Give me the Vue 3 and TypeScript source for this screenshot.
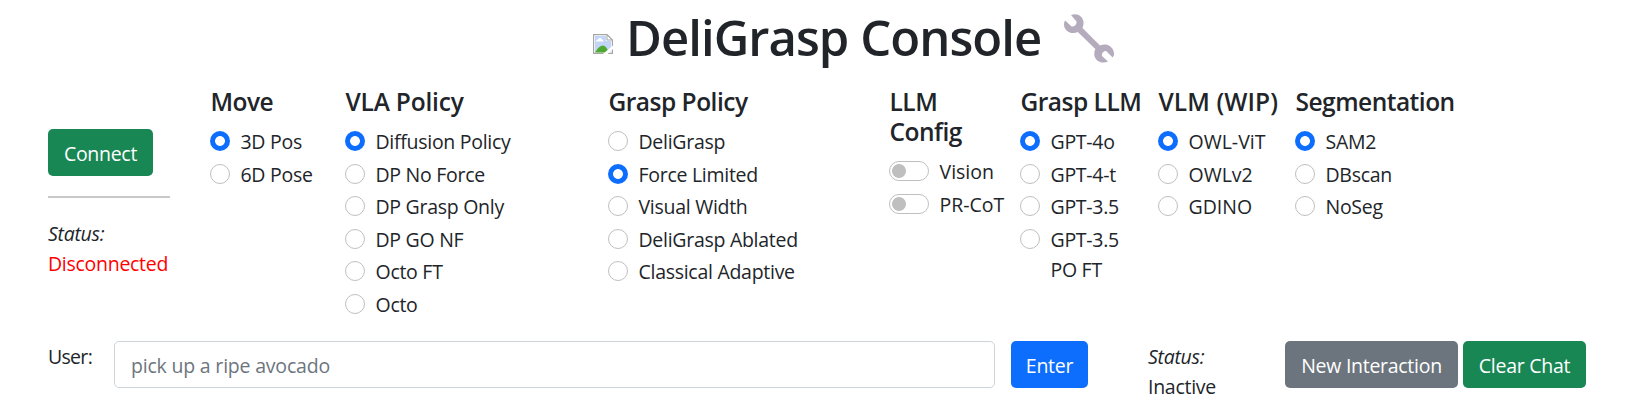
<script setup lang="ts">
import { ref } from 'vue'

interface Group {
  title: string
  kind: 'radio' | 'switch'
  options: string[]
  selected: number
}

const groups = ref<Group[]>([
  { title: 'Move', kind: 'radio', options: ['3D Pos', '6D Pose'], selected: 0 },
  {
    title: 'VLA Policy',
    kind: 'radio',
    options: ['Diffusion Policy', 'DP No Force', 'DP Grasp Only', 'DP GO NF', 'Octo FT', 'Octo'],
    selected: 0,
  },
  {
    title: 'Grasp Policy',
    kind: 'radio',
    options: ['DeliGrasp', 'Force Limited', 'Visual Width', 'DeliGrasp Ablated', 'Classical Adaptive'],
    selected: 1,
  },
  { title: 'LLM\nConfig', kind: 'switch', options: ['Vision', 'PR-CoT'], selected: -1 },
  { title: 'Grasp LLM', kind: 'radio', options: ['GPT-4o', 'GPT-4-t', 'GPT-3.5', 'GPT-3.5\nPO FT'], selected: 0 },
  { title: 'VLM (WIP)', kind: 'radio', options: ['OWL-ViT', 'OWLv2', 'GDINO'], selected: 0 },
  { title: 'Segmentation', kind: 'radio', options: ['SAM2', 'DBscan', 'NoSeg'], selected: 0 },
])
const prompt = ref('')
</script>

<template>
  <main class="console">
    <header class="title">
      <svg class="missing" viewBox="0 0 20 20">
        <path d="M.6.6H14l5.400 5.400v13.400H.6z" fill="#fff" stroke="#a5a5a5" stroke-width="1.2" />
        <path d="M2 2h11v5h5v11H2z" fill="#c3d5f7" />
        <path d="M3 7.500Q3 5.500 5 5.500Q7 2 9 5.500Q10.500 5.500 10.500 7.500z" fill="#fff" />
        <path d="M2 18.500Q6 11.500 10 11.500Q13 11.500 16 18.500z" fill="#4fa832" />
        <path d="M14 1v5h5z" fill="#fff" stroke="#a5a5a5" />
        <path d="M10 20 20 11.500V15l-5.500 5z" fill="#fff" />
      </svg>
      <h1>DeliGrasp Console</h1>
      <svg class="wrench" viewBox="0 0 50 50">
        <path
          d="M7 1C13-1.500 19 2 19.500 8c.2 2-.2 4-1 6l17.500 17.500c2-1 4-1.300 6-1 5 .8 8.500 5.500 8 10.500l-1.300 2.500-6.700-6.500c-2-.5-5 2.500-4 5l6 5.500c-5 2.500-12 .5-13.500-5.500-.5-2.500-.2-5 .8-7L13.800 18C8 21 0 17.500 0 10.500c0-1.500.4-3 1.200-4L7.500 12.500c3 .5 5.500-2 5-5z"
          fill="#b4acbc"
        />
      </svg>
    </header>

    <section class="settings">
      <div class="connection">
        <button class="btn green">Connect</button>
        <hr />
        <p><i>Status:</i><br /><span class="offline">Disconnected</span></p>
      </div>
      <fieldset v-for="g in groups" :key="g.title">
        <h2>{{ g.title }}</h2>
        <label v-for="(o, i) in g.options" :key="o">
          <input
            :type="g.kind === 'radio' ? 'radio' : 'checkbox'"
            :class="g.kind"
            :name="g.title"
            :checked="g.selected === i"
            @change="g.selected = i"
          />
          <span>{{ o }}</span>
        </label>
      </fieldset>
    </section>

    <section class="chat">
      <span class="user">User:</span>
      <input v-model="prompt" class="prompt" placeholder="pick up a ripe avocado" />
      <button class="btn blue">Enter</button>
      <p class="state"><i>Status:</i><br />Inactive</p>
      <button class="btn gray">New Interaction</button>
      <button class="btn green clear">Clear Chat</button>
    </section>
  </main>
</template>

<style>
body {
  margin: 0;
  background: #fff;
  overflow: hidden;
}
</style>

<style scoped>
* {
  box-sizing: border-box;
}
.console {
  height: 407px;
  padding-left: 48px;
  overflow: hidden;
  color: #212529;
  font: 19.5px/30px 'Open Sans', 'Noto Sans', sans-serif;
  letter-spacing: -0.28px;
}
.title {
  display: flex;
  height: 87px;
  padding-left: 545px;
}
.missing {
  width: 20px;
  height: 20px;
  margin-top: 34px;
}
h1 {
  width: 436px;
  margin: 7px 0 0 13px;
  font-size: 49px;
  font-weight: 600;
  line-height: 60px;
  letter-spacing: -0.95px;
  white-space: nowrap;
}
.wrench {
  width: 50px;
  height: 50px;
  margin: 13.5px 0 0 2px;
}
.settings {
  display: grid;
  grid-template-columns: 162px 135px 263px 281px 131px 138px 137px 180px;
  height: 254px;
}
.connection {
  width: 122px;
  padding-top: 42px;
}
hr {
  height: 2px;
  margin: 20px 0 21px;
  border: 0;
  background: #c7c8c9;
}
p {
  margin: 0;
}
.offline {
  color: #f00;
}
fieldset {
  min-width: 0;
  margin: 0;
  padding: 0;
  border: 0;
}
h2 {
  margin: 0 0 10px;
  padding-left: 0.5px;
  font-size: 24.5px;
  font-weight: 600;
  line-height: 30px;
  letter-spacing: -0.5px;
  white-space: pre;
}
fieldset:nth-child(3) h2 {
  letter-spacing: -0.2px;
}
fieldset:nth-child(7) h2 {
  letter-spacing: 0.1px;
}
label {
  display: flex;
  gap: 10.5px;
  margin-bottom: 2.5px;
  white-space: pre;
}
fieldset:nth-child(5) label,
fieldset:nth-child(7) label {
  letter-spacing: 0;
}
.radio,
.switch {
  appearance: none;
  flex: none;
  width: 20px;
  height: 20px;
  margin: 4px 0 0;
  border: 1px solid #bfbfbf;
  border-radius: 10px;
  background: #fff;
}
.radio:checked {
  border: 0;
  background: radial-gradient(circle, #fff 4.5px, #0d6efd 5.3px);
}
.switch {
  width: 40px;
  background: radial-gradient(circle at 9px 9px, #bfbfbf 6.5px, #fff 7.3px);
}
.btn {
  height: 47px;
  padding: 2px 0 0;
  border: 0;
  border-radius: 5px;
  color: #fff;
  font: inherit;
  letter-spacing: inherit;
  white-space: nowrap;
}
.connection .btn {
  display: block;
  width: 105px;
}
.green {
  background: #198754;
}
.blue {
  width: 77px;
  margin-left: 16px;
  background: #0d6efd;
}
.gray {
  width: 173px;
  background: #6c757d;
}
.clear {
  width: 123px;
  margin-left: 5px;
}
.chat {
  display: flex;
  align-items: flex-start;
}
.user {
  width: 66px;
  padding-top: 1px;
  letter-spacing: -0.7px;
}
.prompt {
  width: 881px;
  height: 47px;
  padding: 2px 16px 0;
  border: 1px solid #ced4da;
  border-radius: 5px;
  color: inherit;
  font: inherit;
  letter-spacing: -0.2px;
}
.prompt::placeholder {
  color: #6c757d;
  opacity: 1;
}
.state {
  width: 137px;
  padding-top: 1px;
  margin-left: 60px;
}
</style>
